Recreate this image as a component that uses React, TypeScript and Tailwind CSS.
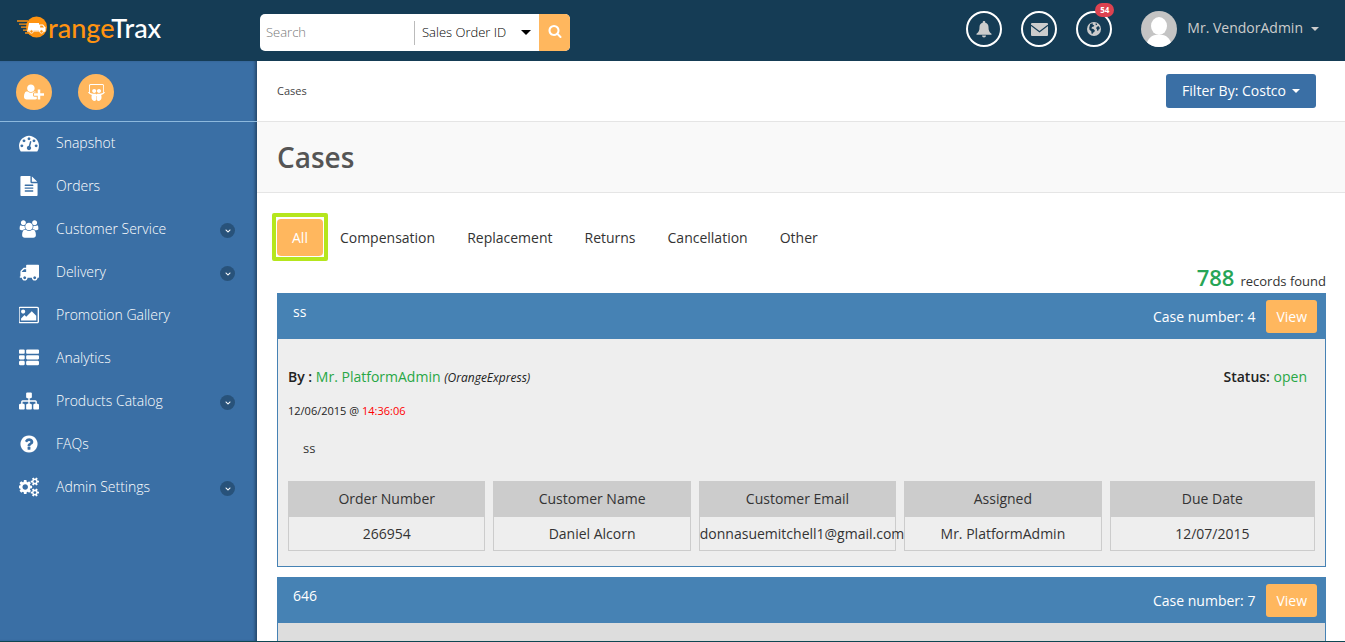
import React from "react";
import { FaSlideshare, FaChevronDown } from "react-icons/fa";

type GlyphProps = { d: string; width?: number; className?: string };

function Glyph({ d, width = 1792, className = "" }: GlyphProps) {
  return (
    <svg viewBox={`0 0 ${width} 1792`} fill="currentColor" aria-hidden="true" className={className}>
      <path d={d} />
    </svg>
  );
}

const icons = {
  search:
    "M1216 832q0-185-131.5-316.5t-316.5-131.5-316.5 131.5-131.5 316.5 131.5 316.5 316.5 131.5 316.5-131.5 131.5-316.5zm512 832q0 52-38 90t-90 38q-54 0-90-38l-343-342q-179 124-399 124-143 0-273.5-55.5t-225-150-150-225-55.5-273.5 55.5-273.5 150-225 225-150 273.5-55.5 273.5 55.5 225 150 150 225 55.5 273.5q0 220-124 399l343 343q37 37 37 90z",
  userPlus:
    "M704 896q-159 0-271.5-112.5t-112.5-271.5 112.5-271.5 271.5-112.5 271.5 112.5 112.5 271.5-112.5 271.5-271.5 112.5zm960 128h352q13 0 22.5 9.5t9.5 22.5v192q0 13-9.5 22.5t-22.5 9.5h-352v352q0 13-9.5 22.5t-22.5 9.5h-192q-13 0-22.5-9.5t-9.5-22.5v-352h-352q-13 0-22.5-9.5t-9.5-22.5v-192q0-13 9.5-22.5t22.5-9.5h352v-352q0-13 9.5-22.5t22.5-9.5h192q13 0 22.5 9.5t9.5 22.5v352zm-736 224q0 52 38 90t90 38h256v238q-68 50-171 50h-874q-121 0-194-69t-73-190q0-53 3.5-103.5t14-109 26.5-108.5 43-97.5 62-81 85.5-53.5 111.5-20q19 0 39 17 79 61 154.5 91.5t164.5 30.5 164.5-30.5 154.5-91.5q20-17 39-17 132 0 217 96h-223q-52 0-90 38t-38 90v192z",
  gauge:
    "M384 1152q0-53-37.5-90.5t-90.5-37.5-90.5 37.5-37.5 90.5 37.5 90.5 90.5 37.5 90.5-37.5 37.5-90.5zm192-448q0-53-37.5-90.5t-90.5-37.5-90.5 37.5-37.5 90.5 37.5 90.5 90.5 37.5 90.5-37.5 37.5-90.5zm428 481l101-382q6-26-7.5-48.5t-38.5-29.5-48 6.5-30 39.5l-101 382q-60 5-107 43.5t-63 98.5q-20 77 20 146t117 89 146-20 89-117q16-60-6-117t-72-91zm660-33q0-53-37.5-90.5t-90.5-37.5-90.5 37.5-37.5 90.5 37.5 90.5 90.5 37.5 90.5-37.5 37.5-90.5zm-640-640q0-53-37.5-90.5t-90.5-37.5-90.5 37.5-37.5 90.5 37.5 90.5 90.5 37.5 90.5-37.5 37.5-90.5zm448 192q0-53-37.5-90.5t-90.5-37.5-90.5 37.5-37.5 90.5 37.5 90.5 90.5 37.5 90.5-37.5 37.5-90.5zm320 448q0 261-141 483-19 29-54 29h-1402q-35 0-54-29-141-221-141-483 0-182 71-348t191-286 286-191 348-71 348 71 286 191 191 286 71 348z",
  file:
    "M1596 476q14 14 28 36h-472v-472q22 14 36 28zm-476 164h544v1056q0 40-28 68t-68 28h-1344q-40 0-68-28t-28-68v-1600q0-40 28-68t68-28h800v544q0 40 28 68t68 28zm160 736v-64q0-14-9-23t-23-9h-704q-14 0-23 9t-9 23v64q0 14 9 23t23 9h704q14 0 23-9t9-23zm0-256v-64q0-14-9-23t-23-9h-704q-14 0-23 9t-9 23v64q0 14 9 23t23 9h704q14 0 23-9t9-23zm0-256v-64q0-14-9-23t-23-9h-704q-14 0-23 9t-9 23v64q0 14 9 23t23 9h704q14 0 23-9t9-23z",
  users:
    "M657 896q-162 5-265 128h-134q-82 0-138-40.5t-56-118.5q0-353 124-353 6 0 43.5 21t97.5 42.5 119 21.5q67 0 133-23-5 37-5 66 0 139 81 256zm1071 637q0 120-73 189.5t-194 69.5h-874q-121 0-194-69.5t-73-189.5q0-53 3.5-103.5t14-109 26.5-108.5 43-97.5 62-81 85.5-53.5 111.5-20q10 0 43 21.5t73 48 107 48 135 21.5 135-21.5 107-48 73-48 43-21.5q61 0 111.5 20t85.5 53.5 62 81 43 97.5 26.5 108.5 14 109 3.5 103.5zm-1024-1277q0 106-75 181t-181 75-181-75-75-181 75-181 181-75 181 75 75 181zm704 384q0 159-112.5 271.5t-271.5 112.5-271.5-112.5-112.5-271.5 112.5-271.5 271.5-112.5 271.5 112.5 112.5 271.5zm576 225q0 78-56 118.5t-138 40.5h-134q-103-123-265-128 81-117 81-256 0-29-5-66 66 23 133 23 59 0 119-21.5t97.5-42.5 43.5-21q124 0 124 353zm-128-609q0 106-75 181t-181 75-181-75-75-181 75-181 181-75 181 75 75 181z",
  truck:
    "M640 1408q0-52-38-90t-90-38-90 38-38 90 38 90 90 38 90-38 38-90zm-384-512h384v-256h-158q-13 0-22 9l-195 195q-9 9-9 22v30zm1280 512q0-52-38-90t-90-38-90 38-38 90 38 90 90 38 90-38 38-90zm256-1088v1024q0 15-4 26.5t-13.5 18.5-16.5 11.5-23.5 6-22.5 2-25.5 0-22.5-.5q0 106-75 181t-181 75-181-75-75-181h-384q0 106-75 181t-181 75-181-75-75-181h-64q-3 0-22.5.5t-25.5 0-22.5-2-23.5-6-16.5-11.5-13.5-18.5-4-26.5q0-26 19-45t45-19v-320q0-8-.5-35t0-38 2.5-34.5 6.5-37 14-30.5 22.5-30l198-198q19-19 50.5-32t58.5-13h160v-192q0-26 19-45t45-19h1024q26 0 45 19t19 45z",
  picture:
    "M576 576q0 80-56 136t-136 56-136-56-56-136 56-136 136-56 136 56 56 136zm1024 384v448h-1408v-192l320-320 160 160 512-512zm96-704h-1600q-13 0-22.5 9.5t-9.5 22.5v1216q0 13 9.5 22.5t22.5 9.5h1600q13 0 22.5-9.5t9.5-22.5v-1216q0-13-9.5-22.5t-22.5-9.5zm160 32v1216q0 66-47 113t-113 47h-1600q-66 0-113-47t-47-113v-1216q0-66 47-113t113-47h1600q66 0 113 47t47 113z",
  list:
    "M512 1248v192q0 40-28 68t-68 28h-320q-40 0-68-28t-28-68v-192q0-40 28-68t68-28h320q40 0 68 28t28 68zm0-512v192q0 40-28 68t-68 28h-320q-40 0-68-28t-28-68v-192q0-40 28-68t68-28h320q40 0 68 28t28 68zm1280 512v192q0 40-28 68t-68 28h-960q-40 0-68-28t-28-68v-192q0-40 28-68t68-28h960q40 0 68 28t28 68zm-1280-1024v192q0 40-28 68t-68 28h-320q-40 0-68-28t-28-68v-192q0-40 28-68t68-28h320q40 0 68 28t28 68zm1280 512v192q0 40-28 68t-68 28h-960q-40 0-68-28t-28-68v-192q0-40 28-68t68-28h960q40 0 68 28t28 68zm0-512v192q0 40-28 68t-68 28h-960q-40 0-68-28t-28-68v-192q0-40 28-68t68-28h960q40 0 68 28t28 68z",
  sitemap:
    "M1792 1248v320q0 40-28 68t-68 28h-320q-40 0-68-28t-28-68v-320q0-40 28-68t68-28h96v-192h-512v192h96q40 0 68 28t28 68v320q0 40-28 68t-68 28h-320q-40 0-68-28t-28-68v-320q0-40 28-68t68-28h96v-192h-512v192h96q40 0 68 28t28 68v320q0 40-28 68t-68 28h-320q-40 0-68-28t-28-68v-320q0-40 28-68t68-28h96v-192q0-52 38-90t90-38h512v-192h-96q-40 0-68-28t-28-68v-320q0-40 28-68t68-28h320q40 0 68 28t28 68v320q0 40-28 68t-68 28h-96v192h512q52 0 90 38t38 90v192h96q40 0 68 28t28 68z",
  question:
    "M1024 1376v-192q0-14-9-23t-23-9h-192q-14 0-23 9t-9 23v192q0 14 9 23t23 9h192q14 0 23-9t9-23zm256-672q0-88-55.5-163t-138.5-116-170-41q-243 0-371 213-15 24 8 42l132 100q7 6 19 6 16 0 25-12 53-68 86-92 34-24 86-24 48 0 85.5 26t37.5 59q0 38-20 61t-68 45q-63 28-115.5 86.5t-52.5 125.5v36q0 14 9 23t23 9h192q14 0 23-9t9-23q0-19 21.5-49.5t54.5-49.5q32-18 49-28.5t46-35 44.5-48 28-60.5 12.5-81zm384 192q0 209-103 385.5t-279.5 279.5-385.5 103-385.5-103-279.5-279.5-103-385.5 103-385.5 279.5-279.5 385.5-103 385.5 103 279.5 279.5 103 385.5z",
  cogs:
    "M832 896q0-106-75-181t-181-75-181 75-75 181 75 181 181 75 181-75 75-181zm768 512q0-52-38-90t-90-38-90 38-38 90q0 53 37.5 90.5t90.5 37.5 90.5-37.5 37.5-90.5zm0-1024q0-52-38-90t-90-38-90 38-38 90q0 53 37.5 90.5t90.5 37.5 90.5-37.5 37.5-90.5zm-384 421v185q0 10-7 19.5t-16 10.5l-155 24q-11 35-32 76 34 48 90 115 7 11 7 20 0 12-7 19-23 30-82.5 89.5t-78.5 59.5q-11 0-21-7l-115-90q-37 19-77 31-11 108-23 155-7 24-30 24h-186q-11 0-20-7.5t-10-17.5l-23-153q-34-10-75-31l-118 89q-7 7-20 7-11 0-21-8-144-133-144-160 0-9 7-19 10-14 41-53t47-61q-23-44-35-82l-152-24q-10-1-17-9.5t-7-19.5v-185q0-10 7-19.5t16-10.5l155-24q11-35 32-76-34-48-90-115-7-11-7-20 0-12 7-20 22-30 82-89t79-59q11 0 21 7l115 90q34-18 77-32 11-108 23-154 7-24 30-24h186q11 0 20 7.5t10 17.5l23 153q34 10 75 31l118-89q8-7 20-7 11 0 21 8 144 133 144 160 0 8-7 19-12 16-42 54t-45 60q23 48 34 82l152 23q10 2 17 10.5t7 19.5zm640 533v140q0 16-149 31-12 27-30 52 51 113 51 138 0 4-4 7-122 71-124 71-8 0-46-47t-52-68q-20 2-30 2t-30-2q-14 21-52 68t-46 47q-2 0-124-71-4-3-4-7 0-25 51-138-18-25-30-52-149-15-149-31v-140q0-16 149-31 13-29 30-52-51-113-51-138 0-4 4-7 4-2 35-20t59-34 30-16q8 0 46 46.5t52 67.5q20-2 30-2t30 2q51-71 92-112l6-2q4 0 124 70 4 3 4 7 0 25-51 138 17 23 30 52 149 15 149 31zm0-1024v140q0 16-149 31-12 27-30 52 51 113 51 138 0 4-4 7-122 71-124 71-8 0-46-47t-52-68q-20 2-30 2t-30-2q-14 21-52 68t-46 47q-2 0-124-71-4-3-4-7 0-25 51-138-18-25-30-52-149-15-149-31v-140q0-16 149-31 13-29 30-52-51-113-51-138 0-4 4-7 4-2 35-20t59-34 30-16q8 0 46 46.5t52 67.5q20-2 30-2t30 2q51-71 92-112l6-2q4 0 124 70 4 3 4 7 0 25-51 138 17 23 30 52 149 15 149 31z",
};

const navItems = [
  { label: "Snapshot", d: icons.gauge, width: 1792, expandable: false },
  { label: "Orders", d: icons.file, width: 1792, expandable: false },
  { label: "Customer Service", d: icons.users, width: 2048, expandable: true },
  { label: "Delivery", d: icons.truck, width: 1792, expandable: true },
  { label: "Promotion Gallery", d: icons.picture, width: 1856, expandable: false },
  { label: "Analytics", d: icons.list, width: 1792, expandable: false },
  { label: "Products Catalog", d: icons.sitemap, width: 1792, expandable: true },
  { label: "FAQs", d: icons.question, width: 1792, expandable: false },
  { label: "Admin Settings", d: icons.cogs, width: 1856, expandable: true },
];

const tabs = ["All", "Compensation", "Replacement", "Returns", "Cancellation", "Other"];

const details = [
  ["Order Number", "266954"],
  ["Customer Name", "Daniel Alcorn"],
  ["Customer Email", "donnasuemitchell1@gmail.com"],
  ["Assigned", "Mr. PlatformAdmin"],
  ["Due Date", "12/07/2015"],
];

function Logo() {
  return (
    <a href="#home" aria-label="OrangeTrax" className="flex h-8 items-center">
      <svg width="31" height="26" viewBox="0 0 31 26" aria-hidden="true">
        <g stroke="#ff9310" strokeWidth="1.3" fill="none">
          <path d="M1 6h11M3 9.200h9M5 12.200h7M7 15.200h5M9 18h4" />
        </g>
        <circle cx="20.500" cy="12" r="10.500" fill="#ff9310" />
        <path d="M13 8h10v7.500H11.500z" fill="#fff" />
        <path d="M23 9.500h4l2.500 3v4H23z" fill="#fff" />
        <path d="M24.200 10.500h2.300l1.500 2h-3.800z" fill="#ff9310" />
        <path d="M11 16h18" stroke="#fff" strokeWidth="1" />
        <circle cx="15.500" cy="16.500" r="1.700" fill="#ff9310" stroke="#fff" strokeWidth="0.800" />
        <circle cx="25.500" cy="16.500" r="1.700" fill="#ff9310" stroke="#fff" strokeWidth="0.800" />
      </svg>
      <span className="ml-px font-[Lato] text-[27px] leading-8 font-medium text-[#ff9310]">
        range<span className="text-white">Trax</span>
      </span>
    </a>
  );
}

function RoundButton({ label, children }: { label: string; children: React.ReactNode }) {
  return (
    <button
      type="button"
      aria-label={label}
      className="relative flex size-9 items-center justify-center rounded-full border-2 border-white text-[#ccc]"
    >
      {children}
    </button>
  );
}

function Caret({ className = "" }: { className?: string }) {
  return (
    <svg width="8" height="4" viewBox="0 0 8 4" fill="currentColor" aria-hidden="true" className={className}>
      <path d="M0 0h8L4 4z" />
    </svg>
  );
}

function Header() {
  return (
    <header className="flex h-[61px] shrink-0 items-start bg-[#153c55]">
      <div className="w-[260px] shrink-0 pt-3 pl-4">
        <Logo />
      </div>
      <form className="mt-[14px] flex h-[37px] w-[310px] shrink-0 items-center overflow-hidden rounded-[5px] bg-white" onSubmit={(e) => e.preventDefault()}>
        <input
          type="text"
          aria-label="Search"
          placeholder="Search"
          className="h-full min-w-0 flex-1 px-[6px] pb-[2px] text-[13px] font-light text-black outline-none placeholder:text-[#777]"
        />
        <div className="relative flex w-[125px] items-center border-l border-[#bbb]">
          <select aria-label="Search by" className="h-6 w-full appearance-none bg-transparent pl-[7px] text-[13px] font-light text-black outline-none">
            <option>Sales Order ID</option>
          </select>
          <svg width="10" height="5" viewBox="0 0 10 5" aria-hidden="true" className="pointer-events-none absolute right-2">
            <path d="M0 0h10L5 5z" />
          </svg>
        </div>
        <button type="submit" aria-label="Submit search" className="flex h-full w-[31px] items-center justify-center bg-[#ffb75e] pb-1 text-white">
          <Glyph d={icons.search} className="size-[14px]" />
        </button>
      </form>
      <div className="ml-auto flex items-center pt-[11px] pr-[26px]">
        <div className="flex gap-[19px]">
          <RoundButton label="Notifications">
            <svg width="16" height="17" viewBox="0 0 16 17" fill="currentColor" aria-hidden="true">
              <path d="M8 0c.8 0 1.300.5 1.300 1.200v.6c2 .5 3.200 2.100 3.200 4.200 0 3.500.6 5.200 3 6.800v1H.5v-1c2.400-1.600 3-3.300 3-6.800 0-2.100 1.200-3.700 3.200-4.200v-.6C6.700.5 7.200 0 8 0zM6 14.600h4a2 2 0 0 1-4 0z" />
            </svg>
          </RoundButton>
          <RoundButton label="Messages">
            <svg width="17" height="13" viewBox="0 0 17 13" aria-hidden="true">
              <rect width="17" height="13" rx="1" fill="#ccc" />
              <path d="M0 2.200l8.500 6.500L17 2.200" fill="none" stroke="#153c55" strokeWidth="1.100" />
            </svg>
          </RoundButton>
          <RoundButton label="Alerts">
            <svg width="14" height="14" viewBox="0 0 14 14" aria-hidden="true">
              <circle cx="7" cy="7" r="7" fill="#ccc" />
              <path
                d="M3.200 1.900l2.600-.7-.2 1.300 1.700.9-.6 1.200-1.700.5-.6 1.500 2 .5 1.500 1.300-.6 1.500-1.300.9-.5 1.300-1-.6-.2-2.300-1.800-1.500-.3-2zM8.500 1.400l1.300.1.3 1.200-1.300.5zM9.800 5l1.500-.9 1.200 1.200.2 1.700-1.100.5-.5 1.500-1-.6-.2-1.400-.9-.8z"
                fill="#153c55"
              />
            </svg>
            <span className="absolute -top-[10px] -right-[4px] flex h-[14px] w-[19px] items-center justify-center rounded-[7px] bg-[#dc4250] text-[8px] font-bold text-white">
              54
            </span>
          </RoundButton>
        </div>
        <button type="button" className="ml-[29px] flex items-center text-sm text-[#ccc]">
          <svg width="36" height="36" viewBox="0 0 36 36" aria-hidden="true">
            <clipPath id="avatar">
              <circle cx="18" cy="18" r="18" />
            </clipPath>
            <g clipPath="url(#avatar)">
              <rect width="36" height="36" fill="#c4c4c4" />
              <ellipse cx="18" cy="15" rx="8" ry="9" fill="#fff" />
              <path d="M5 38c0-8 4-13 9-14h8c5 1 9 6 9 14z" fill="#fff" />
            </g>
          </svg>
          <span className="mb-[2px] ml-[10px]">Mr. VendorAdmin</span>
          <Caret className="ml-2" />
        </button>
      </div>
    </header>
  );
}

function Sidebar() {
  return (
    <aside className="w-[257px] shrink-0 bg-[#3a6fa5] text-white shadow-[inset_-3px_0_3px_-1px_rgba(0,0,0,0.35)]">
      <div className="flex h-[61px] items-center gap-[26px] border-b border-[#8db9dd] pt-[2px] pl-4">
        <button type="button" aria-label="Add user" className="flex size-9 items-center justify-center rounded-full bg-[#ffb75e]">
          <Glyph d={icons.userPlus} width={2048} className="h-[18px] w-[20px]" />
        </button>
        <button type="button" aria-label="Presentations" className="flex size-9 items-center justify-center rounded-full bg-[#ffb75e]">
          <FaSlideshare className="size-[17px]" />
        </button>
      </div>
      <nav>
        {navItems.map((item) => (
          <a key={item.label} href="#" className="flex h-[43px] items-center pr-[22px] pb-[2px] pl-[19px] text-sm font-light">
            <Glyph d={item.d} width={item.width} className="h-5 w-5" />
            <span className="ml-[17px] flex-1">{item.label}</span>
            {item.expandable && (
              <span className="mt-1 flex size-[15px] items-center justify-center rounded-full bg-[#28527a]">
                <FaChevronDown className="size-[6px]" />
              </span>
            )}
          </a>
        ))}
      </nav>
    </aside>
  );
}

type CaseProps = { title: string; number: number; tone: string; children?: React.ReactNode };

function CaseCard({ title, number, tone, children }: CaseProps) {
  return (
    <article className={`mb-[10px] border border-[#4682b4] ${tone}`}>
      <div className="flex h-[45px] justify-between bg-[#4682b4] pr-2 pl-[15px] text-sm font-medium text-white">
        <h2 className="pt-2">{title}</h2>
        <div className="flex items-center gap-[11px]">
          <span>Case number: {number}</span>
          <button type="button" className="h-[33px] rounded-[3px] bg-[#ffb75e] px-[10px]">
            View
          </button>
        </div>
      </div>
      {children}
    </article>
  );
}

export default function App() {
  return (
    <div className="flex h-screen flex-col overflow-hidden border-b border-[#0e4652] bg-white font-['Open_Sans',sans-serif] text-[#333]">
      <Header />
      <div className="flex min-h-0 flex-1">
        <Sidebar />
        <main className="min-w-0 flex-1 overflow-hidden">
          <div className="flex h-[61px] items-center justify-between border-b border-[#e5e5e5] pr-[29px] pl-5">
            <span className="text-[11px] text-[#444]">Cases</span>
            <button type="button" className="flex h-[34px] items-center rounded-[3px] bg-[#3a6fa5] px-4 text-sm font-medium text-white">
              Filter By: Costco <Caret className="ml-[6px]" />
            </button>
          </div>
          <div className="flex h-[71px] items-center border-b border-[#e5e5e5] bg-[#f9f9f9] pl-5">
            <h1 className="text-[28px] leading-9 font-semibold text-[#555]">Cases</h1>
          </div>
          <div className="pt-[26px] pr-[19px] pl-5">
            <div role="tablist" className="flex gap-[2px] text-sm">
              {tabs.map((tab, i) => (
                <button
                  key={tab}
                  type="button"
                  role="tab"
                  aria-selected={i === 0}
                  className={i === 0 ? "relative h-[37px] rounded-[4px] bg-[#ffb75e] px-[15px] text-white" : "h-[37px] px-[15px]"}
                >
                  {tab}
                  {i === 0 && <span className="absolute -inset-x-[5px] -top-[6px] -bottom-[5px] rounded-[2px] border-4 border-[#b5e61d]" />}
                </button>
              ))}
            </div>
            <p className="flex h-[37px] items-baseline justify-end pt-[6px] text-[13px]">
              <strong className="mr-[6px] text-[22px] leading-[30px] font-semibold text-[#27a556]">788</strong>
              records found
            </p>
            <CaseCard title="ss" number={4} tone="bg-[#eee]">
              <div className="px-[10px] pt-7 pb-[15px]">
                <div className="flex justify-between pr-2 text-sm">
                  <p>
                    <span className="font-semibold text-[#222]">By : </span>
                    <span className="text-[#28a745]">Mr. PlatformAdmin</span>{" "}
                    <em className="text-xs text-[#222]">(OrangeExpress)</em>
                  </p>
                  <p>
                    <span className="font-semibold text-[#222]">Status:</span> <span className="text-[#28a745]">open</span>
                  </p>
                </div>
                <p className="mt-4 text-[11px] leading-4 text-[#222]">
                  12/06/2015 @ <span className="text-[#f00]">14:36:06</span>
                </p>
                <p className="mt-[19px] pl-[15px] text-[13px] leading-5">ss</p>
                <dl className="mt-[23px] grid grid-cols-5 text-center text-sm">
                  {details.map(([term, value]) => (
                    <div key={term} className="min-w-0 pr-2 last:pr-0">
                      <dt className="bg-[#ccc] py-2">{term}</dt>
                      <dd className="h-[34px] border border-t-0 border-[#ccc] py-[7px] leading-5 whitespace-nowrap">{value}</dd>
                    </div>
                  ))}
                </dl>
              </div>
            </CaseCard>
            <CaseCard title="646" number={7} tone="bg-[#ddd]">
              <div className="h-[228px]" />
            </CaseCard>
          </div>
        </main>
      </div>
    </div>
  );
}
